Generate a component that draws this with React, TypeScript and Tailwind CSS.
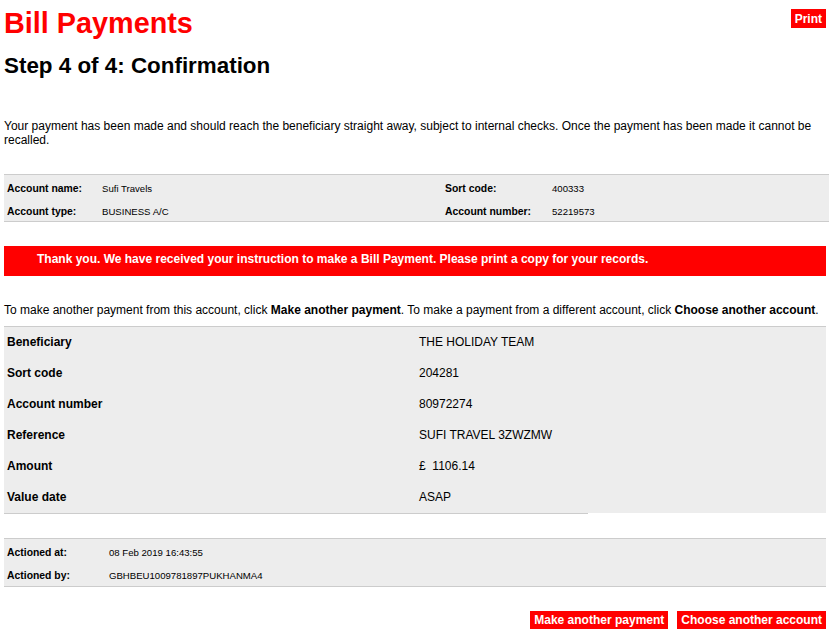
const ACCOUNT = [
  ["Account name:", "Sufi Travels", "Sort code:", "400333"],
  ["Account type:", "BUSINESS A/C", "Account number:", "52219573"],
];

const DETAILS: [string, string][] = [
  ["Beneficiary", "THE HOLIDAY TEAM"],
  ["Sort code", "204281"],
  ["Account number", "80972274"],
  ["Reference", "SUFI TRAVEL 3ZWZMW"],
  ["Amount", "£\u00a0\u00a01106.14"],
  ["Value date", "ASAP"],
];

const ACTIONED = [
  ["Actioned at:", "08 Feb 2019 16:43:55"],
  ["Actioned by:", "GBHBEU1009781897PUKHANMA4"],
];

function RedButton({ children }: { children: React.ReactNode }) {
  return (
    <button className="bg-[#ff0000] px-[4px] py-[2px] text-[12px] font-bold leading-[14px] text-white">
      {children}
    </button>
  );
}

export default function App() {
  return (
    <div
      className="min-h-[636px] bg-white text-black"
      style={{ fontFamily: '"Liberation Sans", Arial, sans-serif' }}
    >
      <div className="ml-[4px] w-[822px] pt-[7px]">
        <header className="flex items-start justify-between">
          <h1 className="text-[28.8px] font-bold leading-[32px] text-[#ff0000]">
            Bill Payments
          </h1>
          <button className="mt-[2px] bg-[#ff0000] px-[4px] pb-[2px] pt-[3px] text-[12px] font-bold leading-[14px] text-white">
            Print
          </button>
        </header>

        <h2 className="mt-[14px] text-[22.4px] font-bold leading-[25px]">
          Step 4 of 4: Confirmation
        </h2>

        <p className="mt-[41px] pr-[10px] text-[12px] leading-[14px]">
          Your payment has been made and should reach the beneficiary straight
          away, subject to internal checks. Once the payment has been made it
          cannot be recalled.
        </p>

        {/* account summary */}
        <div className="mt-[27px] w-[825px] border-y border-[#cccccc] bg-[#ededed] px-[3px]">
          {ACCOUNT.map((r) => (
            <div
              key={r[0]}
              className="grid h-[23px] grid-cols-[95px_343px_107px_1fr] items-baseline pt-[8px]"
            >
              <span className="text-[10.4px] font-bold leading-[12px]">{r[0]}</span>
              <span className="text-[9.6px] leading-[12px]">{r[1]}</span>
              <span className="text-[10.4px] font-bold leading-[12px]">{r[2]}</span>
              <span className="text-[9.6px] leading-[12px]">{r[3]}</span>
            </div>
          ))}
        </div>

        <div className="mt-[24px] h-[30px] bg-[#ff0000] pl-[33px] pt-[6px] text-[12px] font-bold leading-[14px] text-white">
          Thank you. We have received your instruction to make a Bill Payment.
          Please print a copy for your records.
        </div>

        <p className="mt-[27px] text-[12px] leading-[14px]">
          To make another payment from this account, click{" "}
          <b>Make another payment</b>. To make a payment from a different
          account, click <b>Choose another account</b>.
        </p>

        {/* payment details */}
        <div className="mt-[9px] border-t border-[#cccccc] bg-[#ededed]">
          {DETAILS.map(([k, v]) => (
            <div
              key={k}
              className="grid h-[31px] grid-cols-[412px_1fr] px-[3px] pt-[8px] text-[12px] leading-[14px]"
            >
              <span className="font-bold">{k}</span>
              <span className="whitespace-pre">{v}</span>
            </div>
          ))}
        </div>
        <div className="h-px w-[584px] bg-[#cccccc]" />

        {/* audit */}
        <div className="mt-[24px] border-y border-[#cccccc] bg-[#ededed] px-[3px] pb-px">
          {ACTIONED.map(([k, v]) => (
            <div
              key={k}
              className="grid h-[23px] grid-cols-[102px_1fr] items-baseline pt-[8px]"
            >
              <span className="text-[10.4px] font-bold leading-[12px]">{k}</span>
              <span className="text-[9.6px] leading-[12px]">{v}</span>
            </div>
          ))}
        </div>

        <div className="mt-[24px] flex justify-end gap-[9px]">
          <RedButton>Make another payment</RedButton>
          <RedButton>Choose another account</RedButton>
        </div>
      </div>
    </div>
  );
}
